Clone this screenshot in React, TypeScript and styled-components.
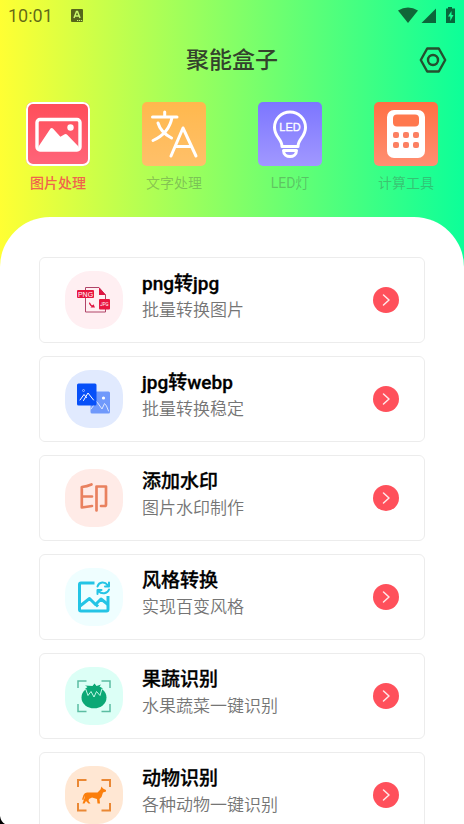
import React, { useState } from "react";
import styled, { createGlobalStyle } from "styled-components";

const GlobalStyle = createGlobalStyle`
  * { box-sizing: border-box; }
  body {
    margin: 0;
    background: #000;
    font-family: Roboto, "Noto Sans CJK SC", sans-serif;
  }
  button { font: inherit; border: 0; padding: 0; background: none; cursor: pointer; }
`;

const Screen = styled.div`
  position: relative;
  display: flex;
  flex-direction: column;
  height: 100vh;
  overflow: hidden;
  background: linear-gradient(90deg, #ffff33, #0cff99);
`;

const StatusBar = styled.div`
  display: flex;
  align-items: center;
  justify-content: space-between;
  flex: none;
  height: 32px;
  padding: 0 8px;
  color: rgba(0, 0, 0, 0.6);
  font-size: 18px;
  line-height: 32px;
`;

const StatusGroup = styled.div`
  display: flex;
  align-items: center;
  gap: 18px;
`;

const TitleBar = styled.header`
  display: grid;
  grid-template-columns: 28px 1fr 28px;
  align-items: center;
  flex: none;
  height: 56px;
  padding: 0 17px;
`;

const Title = styled.h1`
  grid-column: 2;
  margin: 0;
  padding-top: 2px;
  text-align: center;
  color: #33432c;
  font-size: 23px;
  font-weight: 500;
  line-height: 32px;
`;

const IconButton = styled.button`
  display: flex;
  align-items: center;
  justify-content: center;
  height: 28px;
`;

const Tabs = styled.nav`
  display: grid;
  grid-template-columns: repeat(4, 1fr);
  flex: none;
  padding: 14px 0 24px;
`;

const Tab = styled.button<{ $active: boolean }>`
  display: flex;
  flex-direction: column;
  align-items: center;
  gap: 7px;
  color: ${(p) => (p.$active ? "#f0644c" : "rgba(75, 95, 75, 0.38)")};
  font-size: 14px;
  font-weight: ${(p) => (p.$active ? 500 : 400)};
  line-height: 20px;
`;

const Tile = styled.span<{ $from: string; $to: string; $active: boolean }>`
  display: flex;
  width: 64px;
  height: 64px;
  border-radius: ${(p) => (p.$active ? 7 : 5)}px;
  background: linear-gradient(${(p) => p.$from}, ${(p) => p.$to});
  box-shadow: ${(p) => (p.$active ? "inset 0 0 0 2px #fff" : "none")};
`;

const Panel = styled.main`
  flex: 1;
  min-height: 0;
  overflow: hidden;
  padding: 40px 39px 0;
  border-radius: 50px 50px 0 0;
  background: #fff;
`;

const CardList = styled.ul`
  display: flex;
  flex-direction: column;
  gap: 13px;
  margin: 0;
  padding: 0;
  list-style: none;
`;

const Card = styled.button`
  && {
    display: flex;
    align-items: center;
    width: 100%;
    height: 86px;
    padding: 0 25px;
    border: 1px solid #ececec;
    border-radius: 6px;
    background: #fff;
    text-align: left;
  }
`;

const Badge = styled.span<{ $color: string }>`
  display: flex;
  flex: none;
  width: 58px;
  height: 58px;
  border-radius: 25px;
  background: ${(p) => p.$color};
`;

const CardText = styled.span`
  display: flex;
  flex-direction: column;
  flex: 1;
  margin: 0 19px;
  padding-bottom: 6px;
`;

const CardTitle = styled.span`
  color: #000;
  font-size: 19px;
  font-weight: 500;
  -webkit-text-stroke: 0.3px #000;
  line-height: 26px;
`;

const CardNote = styled.span`
  color: #757575;
  font-size: 17px;
  font-weight: 350;
  line-height: 26px;
`;

const Arrow = styled.span`
  display: flex;
  align-items: center;
  justify-content: center;
  flex: none;
  width: 26px;
  height: 26px;
  border-radius: 50%;
  background: #ff505b;
`;

const ScreenCorner = styled.svg`
  position: absolute;
  left: 0;
  bottom: 0;
`;

const line = {
  fill: "none",
  strokeLinecap: "round" as const,
  strokeLinejoin: "round" as const,
};

const PictureArt = () => (
  <svg width="64" height="64" viewBox="0 0 64 64">
    <rect x="11" y="17.500" width="43" height="30.500" rx="3" {...line} stroke="#fff" strokeWidth="3.400" />
    <path d="M12.500 44.500 24.500 26.500q1.200-1.200 2.400 0l7.500 8.200 4.300-2.400q1.200-.6 2.200.2L52.500 44.500v3H12.500z" fill="#fff" />
    <circle cx="44.500" cy="25.500" r="3.200" fill="#fff" />
  </svg>
);

const TranslateArt = () => (
  <svg width="64" height="64" viewBox="0 0 64 64">
    <g {...line} stroke="#fff" strokeWidth="3">
      <path d="M10.500 15H35M22.700 10V15M30 15.500C28 26 21 34 11 38.500M16 21C18 28 23 32.500 29.500 36" />
      <path d="M29 54 41 26 54 54M33.500 44.500H49.500" />
    </g>
  </svg>
);

const LedArt = () => (
  <svg width="64" height="64" viewBox="0 0 64 64">
    <g {...line} stroke="#fff" strokeWidth="3">
      <path d="M24 44.500C24 37 16.500 35 16.500 25.500a15.500 15.500 0 0 1 31 0C47.500 35 40 37 40 44.500z" />
      <path d="M25.500 48.500H38.500C38.500 56.500 25.500 56.500 25.500 48.500z" />
    </g>
    <text x="32" y="29" textAnchor="middle" fill="#fff" stroke="#fff" strokeWidth=".3" fontFamily="Liberation Sans, sans-serif" fontSize="11">LED</text>
  </svg>
);

const CalculatorArt = () => (
  <svg width="64" height="64" viewBox="0 0 64 64">
    <rect x="13" y="8" width="38" height="48" rx="7" fill="#fff" />
    <rect x="19" y="12.500" width="26" height="12" rx="4" fill="#ff784e" />
    {[30, 40].map((y) =>
      [19, 29, 39].map((x) => (
        <rect key={`${x}-${y}`} x={x} y={y} width="6" height="6" rx="2" fill="#fc8062" />
      )),
    )}
  </svg>
);

const PngArt = () => (
  <svg width="58" height="58" viewBox="0 0 58 58">
    <path d="M20.500 20V16.500H34L40.500 24V28M20.500 27V41H40.500V38" {...line} stroke="#b04468" strokeWidth="1" />
    <path d="M34 16.500 41 24H34z" fill="#df1642" />
    <rect x="12" y="19" width="17" height="8" rx="1" fill="#e8163f" />
    <rect x="34" y="28" width="11" height="10.500" rx="1" fill="#e8163f" />
    <text x="20.500" y="25.500" textAnchor="middle" fill="#fff" fontFamily="Liberation Sans, sans-serif" fontSize="7">PNG</text>
    <text x="39.500" y="35" textAnchor="middle" fill="#fff" fontSize="4.500">JPG</text>
    <path d="M24.500 32Q25.500 35 28.500 35.500" {...line} stroke="#df1642" strokeWidth="1.200" />
    <path d="m30 36.500-4.500-.1 3-3.200z" fill="#df1642" />
  </svg>
);

const WebpArt = () => (
  <svg width="58" height="58" viewBox="0 0 58 58">
    <rect x="25.500" y="21.500" width="19.500" height="22" rx="1.500" fill="#7099fb" />
    <path d="m26 39 3-4 2-4 2.500 3 3.500 5 2.500-5.500 2 2.500 2 5" {...line} stroke="#dce7ff" strokeWidth="1" />
    <circle cx="38.500" cy="28" r="1.600" fill="#fff" />
    <rect x="12" y="13.500" width="19.500" height="22" rx="1.500" fill="#0750f8" />
    <path d="m15 30 4-5.500 2.500 3M18.500 30.500 23 23l5.500 7" {...line} stroke="#fff" strokeWidth="1" />
    <circle cx="18.500" cy="20.500" r="1" fill="none" stroke="#c0d2ff" strokeWidth=".7" />
  </svg>
);

const StampArt = () => (
  <svg width="58" height="58" viewBox="0 0 58 58">
    <g {...line} stroke="#e9815f" strokeWidth="2.700">
      <path d="M26.500 15.500Q22 17.500 16.800 18V38.500L27 37M16.800 27.500H27" />
      <path d="M31.500 41.500V17.500H41V35.500Q41 37 39.500 37H36" />
    </g>
  </svg>
);

const StyleArt = () => (
  <svg width="58" height="58" viewBox="0 0 58 58">
    <g fill="none" strokeLinejoin="round" stroke="#24c4e5" strokeWidth="3">
      <path d="M29.500 15H16Q14.500 15 14.500 16.500V41.500Q14.500 43 16 43H41.500Q43 43 43 41.500V28" />
      <path d="m15 38 9.500-7.500 6 6 5.500-5.500 7 5.500M30 35.500l3 3" />
    </g>
    <g {...line} stroke="#24c4e5" strokeWidth="2">
      <path d="M32.500 18.500C34 13.500 40 13.500 42.500 17M44 14.500v4h-4M44 21.500C42.500 26 36.500 26.500 33.500 23M32.500 26v-4h4" />
    </g>
  </svg>
);

const ScanFrame = ({ color, width }: { color: string; width: number }) => (
  <path
    d="M13 21V14H21.500M36.500 14H45V21M13 37V44.500H21.500M36.500 44.500H45V37"
    fill="none"
    stroke={color}
    strokeWidth={width}
  />
);

const TomatoArt = () => (
  <svg width="58" height="58" viewBox="0 0 58 58">
    <ScanFrame color="#5bbda2" width={1.5} />
    <ellipse cx="29" cy="30.500" rx="12.500" ry="10.800" fill="#0ba875" />
    <path d="M20.500 21.500 23 28.500 26 24.500 29 30 31.500 24.500 35 28.500 37 21.500" fill="none" stroke="#c2f7e6" strokeWidth="1" strokeLinejoin="round" />
    <path d="M20 22 22.500 20 20 18.500 27.500 19 29.500 16.500 31.500 19 36 17.500 34.500 19.500 38 21.500 35.500 22 34.500 26 31.500 22.500 29 27.500 26.500 22.500 23.500 26 22.500 22z" fill="#0ba875" />
  </svg>
);

const DogArt = () => (
  <svg width="58" height="58" viewBox="0 0 58 58">
    <ScanFrame color="#ea8834" width={2} />
    <path d="M22 26.500H32.500L35.500 23.500 36.500 20.500 38 22.500 41 24V25.500L38 26.500 36.500 31 34.500 33 35 37.500H32.500L32 33 27 31.500 24 33 23.500 35 25.500 37.500H23.500L21 35 19.500 37.500H17.500L19.500 32V29.500L18.500 34 17 33.500 18.500 29Q19.500 26.500 22 26.500z" fill="#fb7f0d" />
  </svg>
);

const tabs = [
  { label: "图片处理", from: "#ff4d59", to: "#ff657a", Art: PictureArt },
  { label: "文字处理", from: "#ffb84d", to: "#ffc06a", Art: TranslateArt },
  { label: "LED灯", from: "#7c76ff", to: "#a198ff", Art: LedArt },
  { label: "计算工具", from: "#ff6f43", to: "#ff8f72", Art: CalculatorArt },
];

const tools = [
  { title: "png转jpg", note: "批量转换图片", color: "#ffeff2", Art: PngArt },
  { title: "jpg转webp", note: "批量转换稳定", color: "#e1eafe", Art: WebpArt },
  { title: "添加水印", note: "图片水印制作", color: "#ffebe7", Art: StampArt },
  { title: "风格转换", note: "实现百变风格", color: "#effeff", Art: StyleArt },
  { title: "果蔬识别", note: "水果蔬菜一键识别", color: "#dcfff6", Art: TomatoArt },
  { title: "动物识别", note: "各种动物一键识别", color: "#ffe7d3", Art: DogArt },
];

export default function App() {
  const [active, setActive] = useState(0);

  return (
    <>
      <GlobalStyle />
      <Screen>
        <StatusBar>
          <StatusGroup>
            <span>10:01</span>
            <svg width="12" height="14" viewBox="0 0 12 14">
              <rect width="12" height="13" rx="1" fill="currentColor" />
              <path d="M3 9 5.500 2.500H6.500L9 9M4 7H8" fill="none" stroke="#c8f76a" strokeWidth="1.500" />
              <path d="M6 11.500h1.200m.8 0h1.200m.8 0h1.200" stroke="#c8f76a" strokeWidth="1" />
            </svg>
          </StatusGroup>
          <svg width="58" height="18" viewBox="0 0 58 18" fill="currentColor">
            <path d="M0 3.500Q10 -2.500 20 3.500L10 16z" />
            <path d="M38 1.500V16H23.500z" />
            <path fillRule="evenodd" d="M50 0h4v1.500h3V16H48V1.500h2zM53.500 4 50 9.500h2.300v4.500L55.500 8H53.500z" />
          </svg>
        </StatusBar>

        <TitleBar>
          <Title>聚能盒子</Title>
          <IconButton aria-label="设置">
            <svg width="28" height="28" viewBox="0 0 28 28" {...line} stroke="#24502f" strokeWidth="2.400">
              <path d="M8.200 2.500H19.800L26.200 14 19.800 25.500H8.200L1.800 14z" />
              <circle cx="14" cy="14" r="5" />
            </svg>
          </IconButton>
        </TitleBar>

        <Tabs>
          {tabs.map(({ label, from, to, Art }, i) => (
            <Tab key={label} $active={i === active} onClick={() => setActive(i)}>
              <Tile $from={from} $to={to} $active={i === active}>
                <Art />
              </Tile>
              {label}
            </Tab>
          ))}
        </Tabs>

        <Panel>
          <CardList>
            {tools.map(({ title, note, color, Art }) => (
              <li key={title}>
                <Card>
                  <Badge $color={color}>
                    <Art />
                  </Badge>
                  <CardText>
                    <CardTitle>{title}</CardTitle>
                    <CardNote>{note}</CardNote>
                  </CardText>
                  <Arrow>
                    <svg width="12" height="14" viewBox="0 0 12 14" {...line} stroke="#ffe9ea" strokeWidth="1.500">
                      <path d="M3.500 2 9 7 3.500 12" />
                    </svg>
                  </Arrow>
                </Card>
              </li>
            ))}
          </CardList>
        </Panel>
        <ScreenCorner width="6" height="8" viewBox="0 0 6 8">
          <path d="M0 0Q1 6 5 8H0z" fill="#000" />
        </ScreenCorner>
      </Screen>
    </>
  );
}
